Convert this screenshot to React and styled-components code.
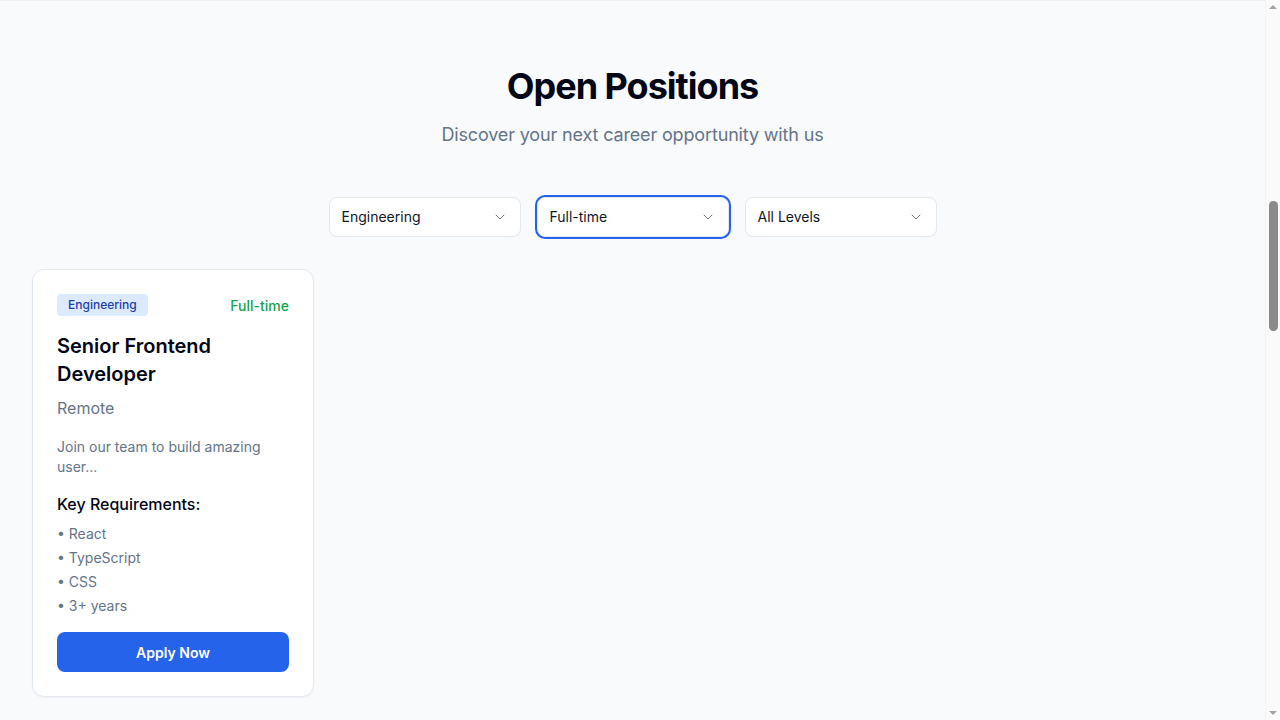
import React, { useLayoutEffect, useRef } from 'react';
import styled, { createGlobalStyle } from 'styled-components';
import { ChevronDown } from 'lucide-react';

const GlobalStyle = createGlobalStyle`
  html, body {
    margin: 0;
    padding: 0;
    height: 100%;
    overflow: hidden;
    background: #f8fafc;
    font-family: Inter, "Noto Sans", sans-serif;
    color: #0f172a;
  }
  * {
    box-sizing: border-box;
  }
`;

const Page = styled.div`
  height: 100vh;
  overflow-y: scroll;
  padding-right: 15px;
  background: #f8fafc;
`;

/* the browser scrollbar of the reference, drawn over the page edge */
const ScrollTrack = styled.div`
  position: fixed;
  top: 0;
  right: 0;
  width: 15px;
  height: 100vh;
  background: #fafafa;
  border-left: 1px solid #f1f3f5;
  pointer-events: none;
`;

const ScrollThumb = styled.div`
  position: absolute;
  top: 201px;
  left: 3px;
  width: 9px;
  height: 130px;
  border-radius: 5px;
  background: #8a8a8a;
`;

const ScrollArrow = styled.div`
  position: absolute;
  left: 3px;
  width: 0;
  height: 0;
  border-left: 4px solid transparent;
  border-right: 4px solid transparent;
  ${(p) =>
    p.$down
      ? 'bottom: 5px; border-top: 4px solid #a3a3a3;'
      : 'top: 5px; border-bottom: 4px solid #a3a3a3;'}
`;

const Hero = styled.div`
  height: 1001px;
  border-bottom: 1px solid #eef2f7;
`;

const Section = styled.section`
  padding: 65px 32px 24px;
`;

const Header = styled.div`
  text-align: center;
  margin-bottom: 48px;
`;

const Title = styled.h1`
  margin: 0 0 15px;
  font-size: 36px;
  line-height: 40px;
  font-weight: 700;
  letter-spacing: -1px;
  color: #020617;
`;

const Subtitle = styled.p`
  margin: 0;
  font-size: 18px;
  line-height: 28px;
  letter-spacing: -0.15px;
  color: #64748b;
`;

const Filters = styled.div`
  display: flex;
  justify-content: center;
  gap: 16px;
  margin-bottom: 32px;
`;

const Select = styled.div`
  width: 192px;
  height: 40px;
  display: flex;
  align-items: center;
  justify-content: space-between;
  padding: 0 12px 1px;
  background: #ffffff;
  border: 1px solid #e2e8f0;
  border-radius: 8px;
  font-size: 14px;
  color: #0f172a;
  box-shadow: ${(p) => (p.$focused ? '0 0 0 2px #2563eb' : 'none')};

  svg {
    color: #64748b;
  }
`;

const Grid = styled.div`
  display: grid;
  grid-template-columns: repeat(auto-fill, 282px);
  gap: 24px;
`;

const Card = styled.article`
  background: #ffffff;
  border: 1px solid #e2e8f0;
  border-radius: 12px;
  padding: 24px;
  box-shadow: 0 1px 2px rgba(15, 23, 42, 0.04);
`;

const CardTop = styled.div`
  display: flex;
  align-items: center;
  justify-content: space-between;
  margin-bottom: 16px;
`;

const Badge = styled.span`
  background: #dbeafe;
  color: #1e40af;
  font-size: 12px;
  font-weight: 500;
  line-height: 16px;
  padding: 3px 11px;
  border-radius: 4px;
`;

const Type = styled.span`
  color: #16a34a;
  font-size: 14px;
  font-weight: 500;
`;

const JobTitle = styled.h3`
  margin: 0 0 8px;
  font-size: 20px;
  line-height: 28px;
  font-weight: 600;
  color: #020617;
`;

const Location = styled.p`
  margin: 0 0 17px;
  font-size: 16px;
  line-height: 24px;
  color: #64748b;
`;

const Description = styled.p`
  margin: 0 0 15px;
  font-size: 14px;
  line-height: 20px;
  color: #64748b;
`;

const ReqTitle = styled.h4`
  margin: 0 0 6px;
  font-size: 16px;
  line-height: 24px;
  font-weight: 500;
  color: #020617;
`;

const ReqList = styled.ul`
  list-style: none;
  margin: 0 0 14px;
  padding: 0;
`;

const ReqItem = styled.li`
  font-size: 14px;
  line-height: 24px;
  color: #64748b;
`;

const ApplyButton = styled.button`
  width: 100%;
  height: 40px;
  border: none;
  border-radius: 8px;
  background: #2563eb;
  color: #ffffff;
  font-family: inherit;
  font-size: 14px;
  font-weight: 600;
  cursor: pointer;
`;

const Footer = styled.div`
  height: 2100px;
`;

const filters = [
  { label: 'Engineering' },
  { label: 'Full-time', focused: true },
  { label: 'All Levels' },
];

const jobs = [
  {
    department: 'Engineering',
    type: 'Full-time',
    title: 'Senior Frontend Developer',
    location: 'Remote',
    description: 'Join our team to build amazing user...',
    requirements: ['React', 'TypeScript', 'CSS', '3+ years'],
  },
];

export default function App() {
  const pageRef = useRef(null);

  useLayoutEffect(() => {
    if (pageRef.current) pageRef.current.scrollTop = 1000;
  }, []);

  return (
    <Page ref={pageRef}>
      <GlobalStyle />
      <Hero />
      <Section>
        <Header>
          <Title>Open Positions</Title>
          <Subtitle>Discover your next career opportunity with us</Subtitle>
        </Header>
        <Filters>
          {filters.map((f) => (
            <Select key={f.label} $focused={f.focused}>
              <span>{f.label}</span>
              <ChevronDown size={16} strokeWidth={1.5} />
            </Select>
          ))}
        </Filters>
        <Grid>
          {jobs.map((job) => (
            <Card key={job.title}>
              <CardTop>
                <Badge>{job.department}</Badge>
                <Type>{job.type}</Type>
              </CardTop>
              <JobTitle>{job.title}</JobTitle>
              <Location>{job.location}</Location>
              <Description>{job.description}</Description>
              <ReqTitle>Key Requirements:</ReqTitle>
              <ReqList>
                {job.requirements.map((r) => (
                  <ReqItem key={r}>• {r}</ReqItem>
                ))}
              </ReqList>
              <ApplyButton>Apply Now</ApplyButton>
            </Card>
          ))}
        </Grid>
      </Section>
      <Footer />
      <ScrollTrack>
        <ScrollArrow />
        <ScrollThumb />
        <ScrollArrow $down />
      </ScrollTrack>
    </Page>
  );
}
